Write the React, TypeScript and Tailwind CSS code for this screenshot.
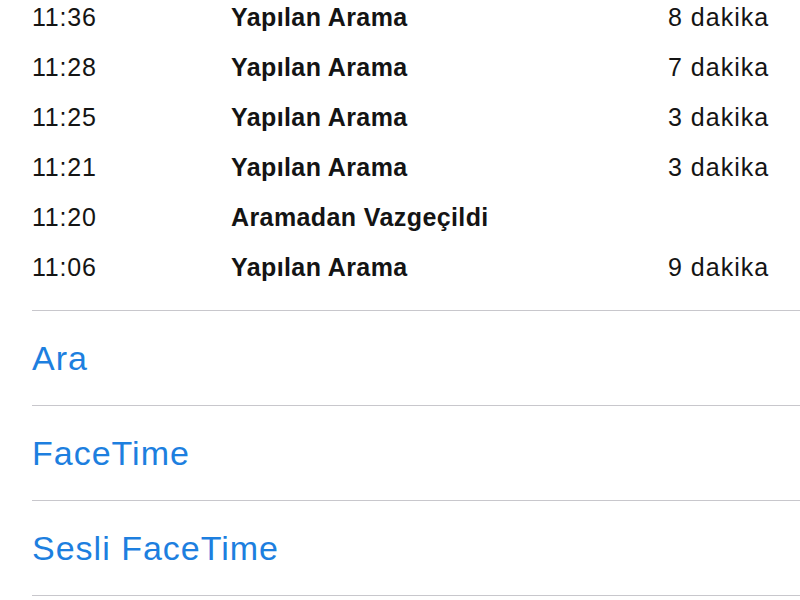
import React from "react";

const calls = [
  { t: "11:36", l: "Yapılan Arama", d: "8 dakika" },
  { t: "11:28", l: "Yapılan Arama", d: "7 dakika" },
  { t: "11:25", l: "Yapılan Arama", d: "3 dakika" },
  { t: "11:21", l: "Yapılan Arama", d: "3 dakika" },
  { t: "11:20", l: "Aramadan Vazgeçildi", d: "" },
  { t: "11:06", l: "Yapılan Arama", d: "9 dakika" },
];

const actions = ["Ara", "FaceTime", "Sesli FaceTime"];

export default function App() {
  return (
    <div
      className="w-[800px] h-[600px] overflow-hidden bg-white"
      style={{ fontFamily: '"Liberation Sans", Arial, sans-serif' }}
    >
      <div className="-mt-[7px] pb-[17px] flex flex-col">
        {calls.map((c, i) => (
          <div key={i} className="h-[50px] flex items-center pl-[32px] text-[25px] text-[#141414]">
            <div className="w-[199px] tracking-[0.8px]">{c.t}</div>
            <div className="w-[437px] font-bold tracking-[0.4px]">{c.l}</div>
            <div className="tracking-[1px]">{c.d}</div>
          </div>
        ))}
      </div>
      <div className="ml-[32px] border-t border-[#c8c7cc]">
        {actions.map((a) => (
          <div
            key={a}
            className="h-[95px] flex items-center border-b border-[#c8c7cc] text-[34px] tracking-[1px] text-[#1d7fdf]"
          >
            {a}
          </div>
        ))}
      </div>
    </div>
  );
}
